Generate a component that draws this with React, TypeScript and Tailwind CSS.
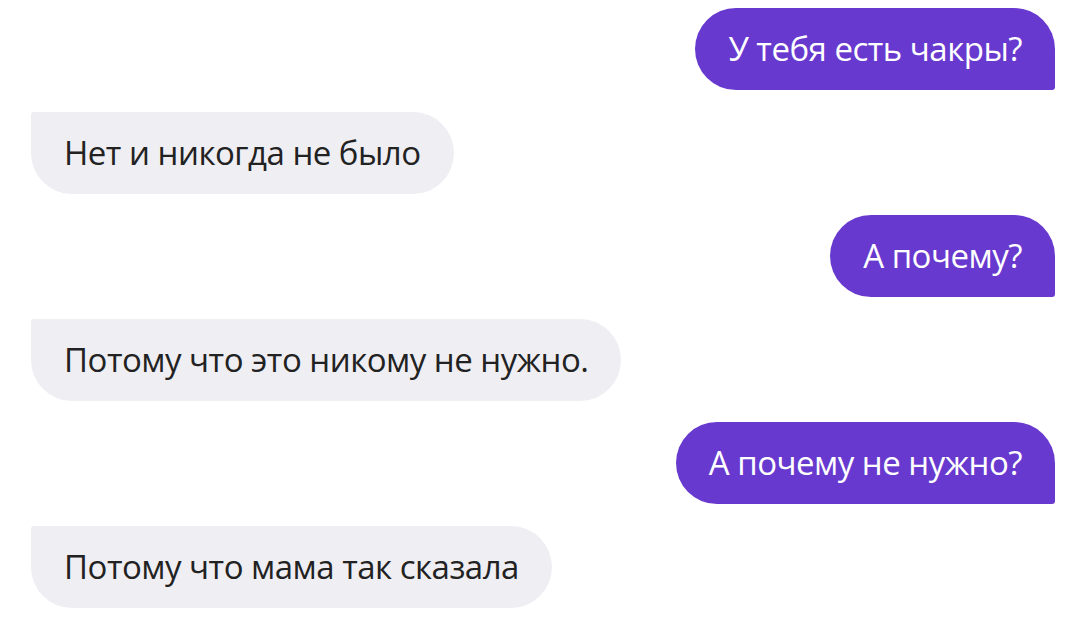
import React from "react";

const msgs: { me: boolean; text: string }[] = [
  { me: true, text: "У тебя есть чакры?" },
  { me: false, text: "Нет и никогда не было" },
  { me: true, text: "А почему?" },
  { me: false, text: "Потому что это никому не нужно." },
  { me: true, text: "А почему не нужно?" },
  { me: false, text: "Потому что мама так сказала" },
];

export default function App() {
  return (
    <div className="w-[1080px] h-[622px] bg-white flex flex-col gap-[21.5px] pt-[8px] pl-[31px] pr-[25px] overflow-hidden" style={{ fontFamily: '"Open Sans", "Noto Sans", sans-serif' }}>
      {msgs.map((m, i) =>
        m.me ? (
          <div key={i} className="flex justify-end">
            <div className="h-[82px] flex items-center px-[33px] bg-[#6839cf] text-white text-[33px] tracking-[-0.5px] rounded-tl-[41px] rounded-tr-[41px] rounded-bl-[41px] rounded-br-[3px]">
              {m.text}
            </div>
          </div>
        ) : (
          <div key={i} className="flex justify-start">
            <div className="h-[82px] flex items-center px-[33px] bg-[#efeef3] text-[#222222] text-[33px] tracking-[-0.5px] rounded-tl-[3px] rounded-tr-[41px] rounded-bl-[41px] rounded-br-[41px]">
              {m.text}
            </div>
          </div>
        )
      )}
    </div>
  );
}
